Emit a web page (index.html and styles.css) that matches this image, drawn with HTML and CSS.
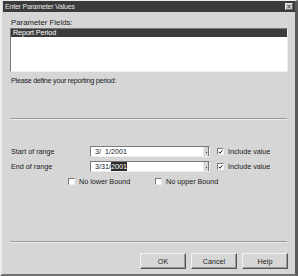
FILE: index.html
```html
<!DOCTYPE html>
<html>
<head>
<meta charset="utf-8">
<link rel="stylesheet" href="styles.css">
</head>
<body>
<div class="window">
  <div class="titlebar">
    <span class="title">Enter Parameter Values</span>
    <span class="close"><svg width="7" height="6" viewBox="0 0 7 6"><path d="M1.5 1L5.5 5M5.5 1L1.5 5" stroke="#333" stroke-width="1"/></svg></span>
  </div>
  <div class="content">
    <div class="label fields-label">Parameter Fields:</div>
    <div class="listbox">
      <div class="list-item selected">Report Period</div>
    </div>
    <div class="label prompt">Please define your reporting period:</div>
    <div class="sep sep1"></div>
    <div class="range-row first">
      <div class="label row-label">Start of range</div>
      <div class="combo"><span class="val">3/&nbsp;&nbsp;1/2001</span><span class="drop"><i></i></span></div>
      <div class="check checked"><svg width="6" height="6" viewBox="0 0 6 6"><path d="M0.8 2.8L2.3 4.5L5.3 1" stroke="#111" stroke-width="1.2" fill="none"/></svg></div>
      <div class="label">Include value</div>
    </div>
    <div class="range-row">
      <div class="label row-label">End of range</div>
      <div class="combo"><span class="val">3/31/<span class="hl">2001</span></span><span class="drop"><i></i></span></div>
      <div class="check checked"><svg width="6" height="6" viewBox="0 0 6 6"><path d="M0.8 2.8L2.3 4.5L5.3 1" stroke="#111" stroke-width="1.2" fill="none"/></svg></div>
      <div class="label">Include value</div>
    </div>
    <div class="bound-row">
      <div class="bound lower"><div class="check"></div><div class="label">No lower Bound</div></div>
      <div class="bound upper"><div class="check"></div><div class="label">No upper Bound</div></div>
    </div>
    <div class="sep sep2"></div>
    <div class="buttons">
      <div class="btn">OK</div>
      <div class="btn">Cancel</div>
      <div class="btn">Help</div>
    </div>
  </div>
</div>
</body>
</html>
```
FILE: styles.css
```css
* { box-sizing: border-box; }
html, body { margin: 0; padding: 0; background: #d6d6d6; }
body { width: 298px; height: 276px; overflow: hidden; font-family: "Liberation Sans", Arial, sans-serif; }
.window {
  width: 298px; height: 276px;
  background: #d6d6d6;
  border-left: 2px solid #ececec;
  border-top: 1px solid #ececec;
  border-right: 3px solid #5a5a5a;
  border-bottom: 2px solid #6e6e6e;
  display: flex; flex-direction: column;
}
.titlebar {
  height: 11px;
  margin: 0 0 0 1px;
  background: #3b3b3b;
  color: #e6e6e6;
  font-size: 7px;
  display: flex; align-items: center; justify-content: space-between;
  padding: 0 2px 0 2px;
}
.title { letter-spacing: -0.2px; }
.close {
  width: 8px; height: 7px;
  background: #c8c8c8;
  border: 1px solid #eee;
  border-right-color: #666; border-bottom-color: #666;
  display: flex; align-items: center; justify-content: center;
}
.close svg { width: 6px; height: 5px; }
.content { padding: 0 7px 0 8px; display: flex; flex-direction: column; flex: 1; }
.label { font-size: 7.2px; color: #1a1a1a; line-height: 9px; white-space: nowrap; }
.fields-label { margin-top: 6px; padding-left: 1px; font-size: 7.8px; }
.listbox {
  margin-top: 1px;
  height: 44px;
  background: #fff;
  border: 1px solid #7a7a7a;
  border-right-color: #eee; border-bottom-color: #eee;
  padding: 0;
}
.list-item { height: 8px; font-size: 7.2px; line-height: 8px; padding-left: 2px; color: #fff; letter-spacing: -0.1px; }
.list-item.selected { background: #3c3c3c; }
.prompt { margin-top: 4px; padding-left: 1px; letter-spacing: -0.25px; }
.sep { height: 2px; border-top: 1px solid #9a9a9a; border-bottom: 1px solid #ececec; margin-right: 1px; }
.sep1 { margin-top: 33px; }
.range-row { display: flex; align-items: center; height: 11px; margin-top: 4px; }
.range-row.first { margin-top: 26px; }
.row-label { width: 80px; padding-left: 1px; }
.combo {
  width: 120px; height: 11px;
  background: #fff;
  border: 1px solid #7a7a7a;
  border-right-color: #eee; border-bottom-color: #eee;
  display: flex; align-items: center; justify-content: space-between;
  font-size: 7.2px; color: #1a1a1a;
  padding-left: 4px;
}
.hl { background: #2a2a2a; color: #fff; }
.drop {
  width: 6px; height: 9px;
  background: #d6d6d6;
  border-left: 1px solid #eee;
  border-right: 1px solid #777;
  display: flex; align-items: center; justify-content: center;
}
.drop i { width: 1px; height: 1px; background: #333; display: block; margin-top: 2px; }
.check {
  width: 7px; height: 7px;
  background: #fff;
  border: 1px solid #7a7a7a;
  border-right-color: #eee; border-bottom-color: #eee;
  display: flex; align-items: center; justify-content: center;
  margin: 0 4px 0 7px;
}
.check svg { display: block; }
.bound-row { display: flex; align-items: center; height: 9px; margin-top: 5px; }
.bound { display: flex; align-items: center; }
.bound .check { margin-left: 0; }
.bound.lower { margin-left: 58px; width: 87px; }
.sep2 { margin-top: 55px; }
.buttons { display: flex; justify-content: flex-end; gap: 5px; margin-top: 10px; padding-right: 0; }
.btn {
  width: 46px; height: 16px;
  border: 1px solid #f2f2f2;
  border-right-color: #555; border-bottom-color: #555;
  box-shadow: inset -1px -1px 0 #999;
  display: flex; align-items: center; justify-content: center;
  font-size: 7.2px; color: #1a1a1a;
}
```
